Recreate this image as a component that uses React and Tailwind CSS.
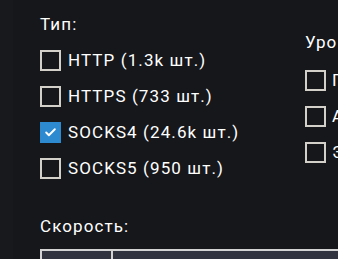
import { Check } from 'lucide-react'

const types = [
  { id: 'http', label: 'HTTP (1.3k шт.)', checked: false },
  { id: 'https', label: 'HTTPS (733 шт.)', checked: false },
  { id: 'socks4', label: 'SOCKS4 (24.6k шт.)', checked: true },
  { id: 'socks5', label: 'SOCKS5 (950 шт.)', checked: false },
]

const levels = [
  { id: 'transparent', label: 'Прозрачный' },
  { id: 'anon', label: 'Анонимный' },
  { id: 'elite', label: 'Элитный' },
]

function Box({ checked }) {
  if (checked) {
    return (
      <span className="flex h-[21px] w-[21px] shrink-0 items-center justify-center bg-[#2e8ad0]">
        <Check size={13} strokeWidth={3.5} color="#fff" />
      </span>
    )
  }
  return <span className="block h-[21px] w-[21px] shrink-0 border-2 border-[#d3cfc9]" />
}

export default function App() {
  return (
    <div className="flex h-[259px] w-[338px] overflow-hidden bg-[#16171b] font-['Roboto',sans-serif] text-[17px] tracking-[1.1px] text-white">
      <div className="w-[13px] shrink-0 bg-[#18191d]" />
      <div className="flex min-w-0 flex-1 flex-col pl-[27px]">
        <div className="flex">
          <div className="w-[265px] shrink-0">
            <div className="pt-[14px] leading-[20px]">Тип:</div>
            <div className="mt-[16px] flex flex-col gap-[15px]">
              {types.map((t) => (
                <label key={t.id} className="flex h-[21px] items-center gap-[7px] whitespace-nowrap">
                  <Box checked={t.checked} />
                  <span>{t.label}</span>
                </label>
              ))}
            </div>
          </div>
          <div className="shrink-0">
            <div className="pt-[32px] leading-[20px]">Уровень:</div>
            <div className="mt-[18px] flex flex-col gap-[15px]">
              {levels.map((l) => (
                <label key={l.id} className="flex h-[21px] items-center gap-[6px] whitespace-nowrap">
                  <Box checked={false} />
                  <span>{l.label}</span>
                </label>
              ))}
            </div>
          </div>
        </div>
        <div className="mt-[37px] leading-[20px]">Скорость:</div>
        <div className="mt-[13px] flex h-[40px] border-l-2 border-t-2 border-[#d3d3d3] bg-[#31343e]">
          <div className="w-[71px] border-r-2 border-[#d3d3d3]" />
          <div className="flex-1" />
        </div>
      </div>
    </div>
  )
}
